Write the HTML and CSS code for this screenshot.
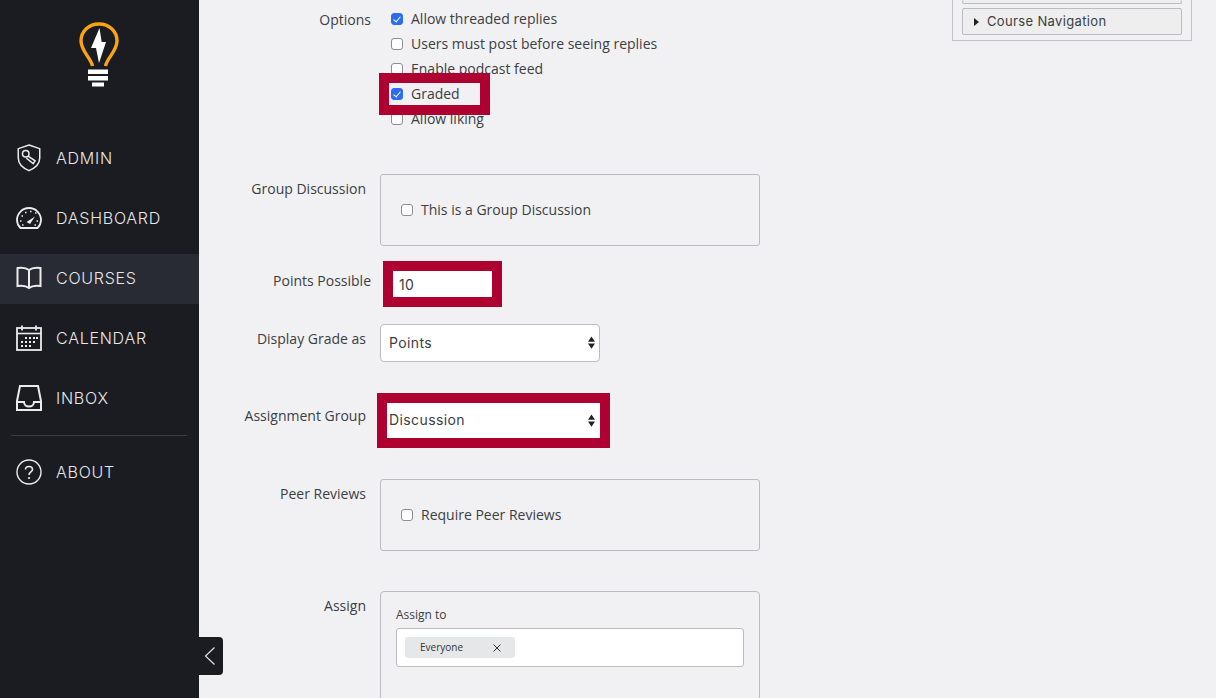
FILE: index.html
```html
<!DOCTYPE html>
<html lang="en">
<head>
<meta charset="utf-8">
<title>Discussion options</title>
<link rel="stylesheet" href="styles.css">
</head>
<body>
<div class="app">
  <nav class="sidebar">
    <div class="logo">
      <svg width="40" height="66" viewBox="0 0 40 66">
        <path d="M13.500 44 C12 36 2 29 2 19 C2 9 10 2 20 2 C30 2 38 9 38 19 C38 29 28 36 26.500 44" fill="none" stroke="#fca311" stroke-width="3.400"/>
        <path d="M20.500 6 L12 26 L17 26 L20 41 L27 20 L22.700 20 Z" fill="#fff"/>
        <path d="M9 47.500h20v4.500H9zM9 54h20v4.500H9zM13 60.500h12v4H13z" fill="#fff"/>
      </svg>
    </div>
    <a class="nav-item">
      <svg class="nav-icon" viewBox="0 0 26 30"><path d="M13 1 L24.500 5 V15 C24.500 22 19 26 13 28.500 C7 26 1.500 22 1.500 15 V5 Z" fill="none" stroke="#ececec" stroke-width="1.600"/><circle cx="9.500" cy="10.500" r="3.500" fill="none" stroke="#ececec" stroke-width="1.600"/><path d="M12 13 L19.500 18 L17.500 21 L10 15" fill="none" stroke="#ececec" stroke-width="1.600"/></svg>
      <span>ADMIN</span>
    </a>
    <a class="nav-item">
      <svg class="nav-icon" viewBox="0 0 26 22"><path d="M4.500 21 C2.500 19 1 16 1 13 A12 12 0 0 1 25 13 C25 16 23.500 19 21.500 21 Z" fill="none" stroke="#ececec" stroke-width="1.800"/><path d="M10.500 15 L19 9.500 L14 17 Z" fill="#ececec"/><path d="M4 14h1.500M5.500 9h1.500M9 5.500h1.500M14 4.500h1.500M19 6h1.500M20.500 14h1.500M6 18h1.500M18.500 18h1.500" stroke="#ececec" stroke-width="1.500"/></svg>
      <span>DASHBOARD</span>
    </a>
    <a class="nav-item active">
      <svg class="nav-icon" viewBox="0 0 26 24"><path d="M13 4 C10 1.500 5 1.500 1.500 2 V20 C5 19.500 10 19.500 13 22 C16 19.500 21 19.500 24.500 20 V2 C21 1.500 16 1.500 13 4 Z M13 4 V22" fill="none" stroke="#ececec" stroke-width="2"/></svg>
      <span>COURSES</span>
    </a>
    <a class="nav-item">
      <svg class="nav-icon" viewBox="0 0 26 26"><rect x="1" y="3" width="24" height="22" fill="none" stroke="#ececec" stroke-width="1.800"/><path d="M1 8.500h24" stroke="#ececec" stroke-width="1.600"/><path d="M6 .5v5M20 .5v5" stroke="#ececec" stroke-width="1.800"/><path d="M9 12h2v2H9zM13 12h2v2h-2zM17 12h2v2h-2zM20 12h2v2h-2zM5 16h2v2H5zM9 16h2v2H9zM13 16h2v2h-2zM17 16h2v2h-2zM5 20h2v2H5zM9 20h2v2H9zM13 20h2v2h-2z" fill="#ececec"/></svg>
      <span>CALENDAR</span>
    </a>
    <a class="nav-item">
      <svg class="nav-icon" viewBox="0 0 26 26"><path d="M1 16 L4 1 H22 L25 16 V25 H1 Z" fill="none" stroke="#ececec" stroke-width="2"/><path d="M1 17 H8 C8 23 18 23 18 17 H25" fill="none" stroke="#ececec" stroke-width="2"/></svg>
      <span>INBOX</span>
    </a>
    <hr class="nav-divider">
    <a class="nav-item">
      <svg class="nav-icon" viewBox="0 0 26 26"><circle cx="13" cy="13" r="12" fill="none" stroke="#ececec" stroke-width="1.400"/><path d="M9.500 10.500 C9.500 6.500 16.500 6.500 16.500 10.500 C16.500 13 13 13 13 16" fill="none" stroke="#ececec" stroke-width="1.600"/><circle cx="13" cy="19" r="1.100" fill="#ececec"/></svg>
      <span>ABOUT</span>
    </a>
  </nav>
  <button class="collapse" aria-label="Collapse">
    <svg width="11" height="18" viewBox="0 0 11 18"><path d="M10.500 .5 L1.500 9 L10.500 17.500" fill="none" stroke="#e0e0e0" stroke-width="1.200"/></svg>
  </button>

  <main class="content">
    <form class="form">
      <div class="row row-options">
        <div class="label label-wide">Options</div>
        <div class="options">
          <label class="option"><input type="checkbox" class="check" checked>Allow threaded replies</label>
          <label class="option"><input type="checkbox" class="check">Users must post before seeing replies</label>
          <label class="option"><input type="checkbox" class="check">Enable podcast feed</label>
          <label class="option option-graded"><input type="checkbox" class="check" checked>Graded<span class="mark"></span></label>
          <label class="option"><input type="checkbox" class="check">Allow liking</label>
        </div>
      </div>

      <div class="row row-group">
        <div class="label label-box">Group Discussion</div>
        <div class="field-box">
          <label class="box-option"><input type="checkbox" class="check">This is a Group Discussion</label>
        </div>
      </div>

      <div class="row row-points">
        <div class="label label-wide label-points">Points Possible</div>
        <div class="red-wrap red-points"><input class="text-input" type="text" value="10"></div>
      </div>

      <div class="row row-display">
        <div class="label label-center label-display">Display Grade as</div>
        <div class="select-wrap select-plain">
          <select class="select"><option>Points</option></select>
          <svg class="arrows" width="7" height="13" viewBox="0 0 8 14"><path d="M4 0 L8 6 H0 Z M0 8 H8 L4 14 Z" fill="#222"/></svg>
        </div>
      </div>

      <div class="row row-assign-group">
        <div class="label label-center label-assign-group">Assignment Group</div>
        <div class="red-wrap red-select">
          <div class="select-wrap select-red">
            <select class="select select-flat"><option>Discussion</option></select>
            <svg class="arrows" width="7" height="13" viewBox="0 0 8 14"><path d="M4 0 L8 6 H0 Z M0 8 H8 L4 14 Z" fill="#222"/></svg>
          </div>
        </div>
      </div>

      <div class="row row-peer">
        <div class="label label-box">Peer Reviews</div>
        <div class="field-box">
          <label class="box-option"><input type="checkbox" class="check">Require Peer Reviews</label>
        </div>
      </div>

      <div class="row row-assign">
        <div class="label label-box">Assign</div>
        <div class="field-box assign-box">
          <div class="assign-label">Assign to</div>
          <div class="assign-input">
            <span class="chip"><span class="chip-text">Everyone</span>
              <svg width="8" height="8" viewBox="0 0 8 8"><path d="M.5 .5 L7.500 7.500 M7.500 .5 L.5 7.500" stroke="#333" stroke-width="1"/></svg>
            </span>
          </div>
        </div>
      </div>
    </form>

    <aside class="panel">
      <div class="panel-item panel-cut"></div>
      <div class="panel-item panel-nav">
        <svg width="5" height="8" viewBox="0 0 5 8"><path d="M0 0 L5 4 L0 8 Z" fill="#222"/></svg>
        <span class="panel-text">Course Navigation</span>
      </div>
    </aside>
  </main>
</div>
</body>
</html>
```
FILE: styles.css
```css
* { box-sizing: border-box; }
html, body { margin: 0; height: 698px; overflow: hidden; }
body { background: #f1f1f4; font-family: "Open Sans", sans-serif; font-size: 14px; color: #3b3e42; }
.app { display: flex; height: 698px; position: relative; overflow: hidden; }

.sidebar { width: 199px; flex: none; background: #1a1c21; display: flex; flex-direction: column; align-items: stretch; }
.logo { height: 133px; padding: 22px 0 0 79px; }
.logo svg { display: block; }
.nav-item { height: 50px; margin-bottom: 10px; display: flex; align-items: center; padding-left: 16px; color: #e8e8e8; font-family: Inter, sans-serif; font-weight: 350; font-size: 16px; letter-spacing: .75px; }
.nav-item span { margin-left: 14px; }
.nav-item.active { background: #282b33; margin-top: 1px; margin-bottom: 9px; padding-bottom: 2px; }
.nav-icon { width: 26px; height: 28px; flex: none; }
.nav-divider { border: 0; border-top: 1px solid #3b3d42; margin: 2px 12px 11px 11px; height: 0; }

.collapse { position: absolute; left: 199px; top: 637px; width: 24px; height: 38px; background: #1a1c21; border: 0; padding: 0 0 0 5px; border-radius: 0 4px 4px 0; display: flex; align-items: center; }

.content { flex: 1; display: flex; align-items: flex-start; min-width: 0; }
.form { width: 753px; flex: none; padding-top: 6px; }
.row { display: flex; }
.label { width: 181px; flex: none; text-align: right; padding-right: 9px; line-height: 20px; }
.label-box, .label-center { padding-right: 14px; }
.label-center { align-self: center; }
.label-wide { padding-top: 4px; }
.label-points { align-self: center; padding-top: 0; margin-top: -7px; }
.label-display { margin-top: -8px; }
.label-assign-group { margin-top: -10px; }
.label-box { padding-top: 5px; }

.options { display: flex; flex-direction: column; padding-left: 11px; }
.option { height: 25px; display: flex; align-items: center; position: relative; }
.check { appearance: none; -webkit-appearance: none; width: 12px; height: 12px; margin: 0 8px 0 0; border: 1px solid #8d8d8d; border-radius: 3px; background: #fff; position: relative; flex: none; }
.check:checked { background: #2b6cf0; border-color: #2b6cf0; }
.check:checked::after { content: ""; position: absolute; left: 3px; top: 1px; width: 3px; height: 6px; border: solid #fff; border-width: 0 1.500px 1.500px 0; transform: rotate(40deg); }
.mark { position: absolute; left: -12px; top: -8px; width: 111px; height: 42px; border: 10px solid #ae0031; z-index: 1; }

.row-group { margin-top: 43px; }
.field-box { width: 380px; height: 72px; border: 1px solid #b9bcc0; border-radius: 3px; display: flex; align-items: center; padding-left: 20px; }
.box-option { display: flex; align-items: center; padding-bottom: 2px; }
.box-option .check { margin-top: 2px; }
.row-points { margin-top: 15px; }
.red-wrap { border: 10px solid #ae0031; background: #fff; }
.red-points { margin-left: 3px; width: 119px; height: 46px; }
.text-input { width: 100%; height: 100%; border: 0; padding: 1px 0 0 6px; background: #fff; font-family: Inter, sans-serif; font-size: 14px; letter-spacing: .3px; color: #3b3e42; outline: 0; display: block; }
.row-display { margin-top: 17px; }
.select-wrap { position: relative; display: block; }
.select-plain { width: 220px; height: 38px; }
.select { appearance: none; -webkit-appearance: none; width: 100%; height: 100%; display: block; border: 1px solid #bdbdbd; border-radius: 4px; background: #fff; padding: 0 0 2px 8px; font-family: Inter, sans-serif; font-size: 14px; letter-spacing: .4px; color: #3b3e42; }
.select-flat { border: 0; border-radius: 0; padding-left: 2px; }
.arrows { position: absolute; right: 5px; top: 50%; margin-top: -7px; pointer-events: none; }
.row-assign-group { margin-top: 31px; }
.red-select { margin-left: -3px; width: 233px; height: 55px; }
.select-red { height: 35px; }
.row-peer { margin-top: 31px; }
.row-assign { margin-top: 40px; }
.assign-box { display: block; height: 140px; padding: 15px 15px 0; border-radius: 4px; }
.assign-label { font-size: 12px; line-height: 16px; margin-bottom: 5px; }
.assign-input { height: 39px; background: #fff; border: 1px solid #b9bcc0; border-radius: 3px; padding: 8px; }
.chip { width: 110px; height: 21px; background: #e6e7e9; border-radius: 3px; display: flex; align-items: center; justify-content: space-between; padding: 0 14px 0 15px; font-size: 10px; color: #333; }
.chip svg { flex: none; }
.chip-text { padding-bottom: 2px; }

.panel { width: 240px; height: 41px; flex: none; border: 1px solid #c0c4c8; border-top: 0; padding: 0 9px; display: flex; flex-direction: column; gap: 4px; }
.panel-item { border: 1px solid #b9bcc0; background: #eeeeee; border-radius: 2px; }
.panel-cut { height: 4px; border-top: 0; }
.panel-nav { height: 27px; display: flex; align-items: center; padding-left: 11px; gap: 8px; font-family: Inter, sans-serif; font-size: 13px; letter-spacing: .35px; color: #3b3e42; }
.panel-text { padding-bottom: 2px; }
```
